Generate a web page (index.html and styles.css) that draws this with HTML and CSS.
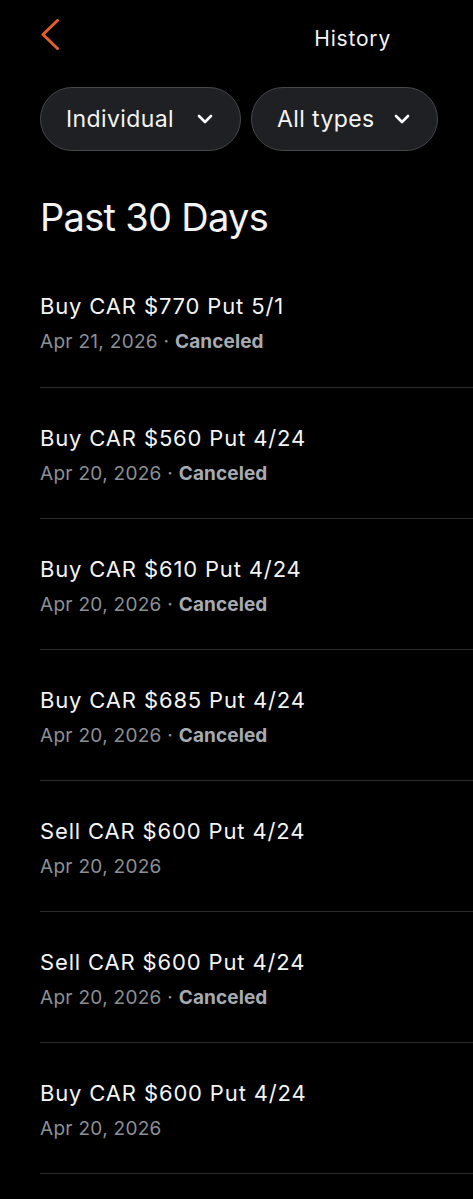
FILE: index.html
```html
<!DOCTYPE html>
<html lang="en">
<head>
<meta charset="utf-8">
<title>History</title>
<link rel="stylesheet" href="styles.css">
</head>
<body>
<div class="page">
  <header class="topbar">
    <button class="back" aria-label="Back">
      <svg width="20" height="32" viewBox="0 0 20 32"><path d="M17.5 1.5 L3 15.5 L17.5 29.5" fill="none" stroke="#e35f2d" stroke-width="3" stroke-linecap="round" stroke-linejoin="round"/></svg>
    </button>
    <div class="title">History</div>
  </header>

  <div class="filters">
    <button class="pill pill-account">
      <span>Individual</span>
      <svg width="16" height="10" viewBox="0 0 16 10"><path d="M2 2 L8 8 L14 2" fill="none" stroke="#fff" stroke-width="2.6" stroke-linecap="round" stroke-linejoin="round"/></svg>
    </button>
    <button class="pill pill-type">
      <span>All types</span>
      <svg width="16" height="10" viewBox="0 0 16 10"><path d="M2 2 L8 8 L14 2" fill="none" stroke="#fff" stroke-width="2.6" stroke-linecap="round" stroke-linejoin="round"/></svg>
    </button>
  </div>

  <h1 class="section-title">Past 30 Days</h1>

  <ul class="orders">
    <li class="order">
      <div class="order-name">Buy CAR $770 Put 5/1</div>
      <div class="order-meta">Apr 21, 2026 · <strong>Canceled</strong></div>
    </li>
    <li class="order">
      <div class="order-name">Buy CAR $560 Put 4/24</div>
      <div class="order-meta">Apr 20, 2026 · <strong>Canceled</strong></div>
    </li>
    <li class="order">
      <div class="order-name">Buy CAR $610 Put 4/24</div>
      <div class="order-meta">Apr 20, 2026 · <strong>Canceled</strong></div>
    </li>
    <li class="order">
      <div class="order-name">Buy CAR $685 Put 4/24</div>
      <div class="order-meta">Apr 20, 2026 · <strong>Canceled</strong></div>
    </li>
    <li class="order">
      <div class="order-name">Sell CAR $600 Put 4/24</div>
      <div class="order-meta">Apr 20, 2026</div>
    </li>
    <li class="order">
      <div class="order-name">Sell CAR $600 Put 4/24</div>
      <div class="order-meta">Apr 20, 2026 · <strong>Canceled</strong></div>
    </li>
    <li class="order">
      <div class="order-name">Buy CAR $600 Put 4/24</div>
      <div class="order-meta">Apr 20, 2026</div>
    </li>
  </ul>
</div>
</body>
</html>
```

FILE: styles.css
```css
html, body {
  margin: 0;
  padding: 0;
  background: #000;
}
body {
  font-family: Inter, "Noto Sans", sans-serif;
  color: #f4f4f4;
  -webkit-font-smoothing: antialiased;
}
.page {
  width: 473px;
  min-height: 1199px;
  overflow: hidden;
}
.topbar {
  display: flex;
  align-items: flex-start;
  justify-content: space-between;
  height: 87px;
  padding: 0 82px 0 40px;
}
.back {
  margin-top: 19px;
  padding: 0;
  border: 0;
  background: none;
  width: 20px;
  height: 32px;
  display: block;
}
.back svg { display: block; }
.title {
  margin-top: 25px;
  font-size: 21px;
  line-height: 28px;
  font-weight: 400;
  letter-spacing: 0.8px;
}
.filters {
  display: flex;
  gap: 10px;
  padding-left: 40px;
}
.pill {
  display: flex;
  align-items: center;
  justify-content: space-between;
  height: 64px;
  box-sizing: border-box;
  border: 1.5px solid #45474b;
  border-radius: 32px;
  background: #1e2023;
  color: #f4f4f4;
  font-family: inherit;
  font-size: 23px;
  letter-spacing: 0.4px;
  padding: 0 27px 0 25px;
}
.pill-account { width: 201px; }
.pill-type { width: 187px; }
.pill svg { display: block; }
.section-title {
  margin: 43px 0 14px 40px;
  font-size: 38px;
  line-height: 46px;
  font-weight: 400;
  letter-spacing: -0.7px;
}
.orders {
  list-style: none;
  margin: 0;
  padding: 0 0 0 40px;
}
.order {
  padding: 36px 0 31px;
  border-bottom: 1px solid #2a2c2f;
}
.order:first-child { padding-top: 38px; padding-bottom: 32px; }
.order-name {
  font-size: 22px;
  line-height: 28px;
  font-weight: 400;
  letter-spacing: 0.85px;
}
.order-meta {
  margin-top: 9px;
  font-size: 19px;
  line-height: 26px;
  color: #8c9095;
  letter-spacing: 0.3px;
}
.order-meta strong {
  color: #a6abb1;
  font-weight: 700;
  letter-spacing: 0.1px;
}
```
